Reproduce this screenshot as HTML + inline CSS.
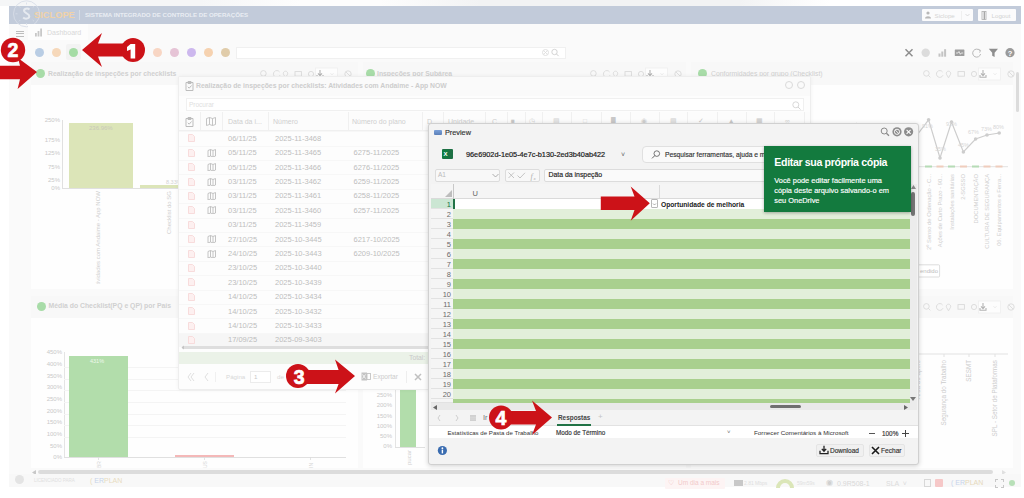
<!DOCTYPE html>
<html><head><meta charset="utf-8">
<style>
*{margin:0;padding:0;box-sizing:border-box}
html,body{width:1024px;height:498px;overflow:hidden;background:#fff;font-family:"Liberation Sans",sans-serif}
.a{position:absolute}
.t{position:absolute;white-space:nowrap;line-height:1}
.dot{position:absolute;width:9px;height:9px;border-radius:50%;background-image:radial-gradient(circle at 50% 30%,rgba(255,255,255,0.45),rgba(255,255,255,0) 60%)}
.ph{position:absolute;background:#f8f8f8}
.pb{position:absolute;background:#fefefe}
.ptitle{position:absolute;white-space:nowrap;line-height:1;font-size:6.84px;font-weight:bold;color:#d0d0d0}
.lbl{position:absolute;white-space:nowrap;line-height:1;font-size:6px;color:#c9c9c9;text-align:right}
.tr{position:absolute;left:0;width:633px;height:14.5px;border-top:1px solid #f6f6f6}
.tc{position:absolute;white-space:nowrap;line-height:1;font-size:7.5px;color:#bdbdbd}
.xr{position:absolute;left:0;width:457px;height:10px}
.rn{position:absolute;left:0;width:22px;height:10px;text-align:right;padding-right:2px;font-size:7px;line-height:10px;color:#6a6a6a;border-bottom:1px solid #e4e4e4}
</style></head><body>
<!-- ============ DASHBOARD (washed) ============ -->
<div class="a" style="left:9px;top:24px;width:1012px;height:463px;background:#fafafa"></div>
<div class="a" style="left:0;top:0;width:1024px;height:6px;background:linear-gradient(90deg,#f5f6f7 0px,#f5f6f7 200px,#fdfdfd 300px,#fdfdfd 380px,#f2f3f4 480px,#f2f3f4 740px,#ffffff 830px)"></div>
<!-- header -->
<div class="a" style="left:9px;top:6px;width:1012px;height:18px;background:#c2cbda"></div>
<svg class="a" style="left:10px;top:0px" width="34" height="30" viewBox="10 0 34 30">
<circle cx="26.5" cy="13.8" r="13" fill="none" stroke="#d8dee8" stroke-width="0.9"/>
<g stroke="#d8dee8" stroke-width="0.8"><path d="M26.5,2.5 V4.5 M26.5,23 V25 M15.5,13.8 H17.5 M35.5,13.8 H37.5 M19,6.3 L20.3,7.6 M32.7,20 L34,21.3 M34,6.3 L32.7,7.6 M20.3,20 L19,21.3"/></g>
<path d="M29.5,9.5 C27.5,7.8 23.5,8.6 24.2,11.3 C24.8,13.4 29.4,13.5 29.3,16.3 C29.2,19 25,19.3 23.2,17.5" fill="none" stroke="#e6eaf0" stroke-width="2"/>
</svg>
<div class="t" style="left:34px;top:10.5px;font-size:9.3px;font-weight:bold;color:#f0d2a8">SICLOPE</div>
<div class="a" style="left:79px;top:10px;width:1px;height:10px;background:#d6dce6"></div>
<div class="t" style="left:85px;top:12px;font-size:6.15px;font-weight:bold;color:#e9edf3">SISTEMA INTEGRADO DE CONTROLE DE OPERAÇÕES</div>
<div class="a" style="left:922px;top:9px;width:51px;height:12px;background:#fbfbfc;border-radius:1px"></div>
<svg class="a" style="left:924px;top:10px" width="8" height="10"><circle cx="4" cy="3" r="1.6" fill="#b8b8b8"/><path d="M1,8.5 C1,5.5 7,5.5 7,8.5 Z" fill="#b8b8b8"/></svg>
<div class="t" style="left:934.5px;top:12.5px;font-size:6.2px;color:#d4d4d4">Siclope</div>
<div class="a" style="left:961px;top:10.5px;width:1px;height:9px;background:#f0f0f0"></div>
<svg class="a" style="left:965px;top:13px" width="5" height="4"><path d="M0.5,1 L2.5,3 L4.5,1" fill="none" stroke="#d0d0d0" stroke-width="0.7"/></svg>
<div class="a" style="left:978px;top:9px;width:38px;height:12px;background:#fbfbfc;border-radius:1px"></div>
<svg class="a" style="left:981px;top:10.5px" width="7" height="9"><rect x="1" y="0.5" width="4" height="8" fill="none" stroke="#b0b0b0" stroke-width="0.8"/><rect x="2.6" y="0.5" width="1.4" height="8" fill="#a8a8a8"/></svg>
<div class="t" style="left:991.5px;top:12.5px;font-size:6.2px;color:#d2d2d2">Logout</div>
<!-- tab bar -->
<div class="a" style="left:28px;top:24px;width:60px;height:16px;background:#fdfdfd"></div>
<div class="a" style="left:16px;top:30.5px;width:7.5px;height:6.5px;border-top:1.2px solid #bdbdbd;border-bottom:1.2px solid #bdbdbd"></div>
<div class="a" style="left:16px;top:33.2px;width:7.5px;height:1.2px;background:#bdbdbd"></div>
<svg class="a" style="left:34px;top:28px" width="10" height="9"><g fill="#c8c8c8"><rect x="1" y="5" width="1.8" height="3.5"/><rect x="3.6" y="3" width="1.8" height="5.5"/><rect x="6.2" y="0.5" width="1.8" height="8"/></g></svg>
<div class="t" style="left:47px;top:29px;font-size:7px;color:#d8d8d8">Dashboard</div>
<!-- toolbar row -->
<div class="dot" style="left:34.5px;top:48px;background:#b9cde4"></div>
<div class="dot" style="left:51.5px;top:48px;background:#f6d8ba"></div>
<div class="a" style="left:66px;top:44px;width:15px;height:16px;background:#f3f3f3;border-radius:2px"></div>
<div class="dot" style="left:68.5px;top:48px;background:#a5dca5"></div>
<div class="dot" style="left:152.7px;top:48px;background:#f8d6c4"></div>
<div class="dot" style="left:169.7px;top:48px;background:#e6c4d6"></div>
<div class="dot" style="left:186.7px;top:48px;background:#cdb8ee"></div>
<div class="dot" style="left:203.5px;top:48px;background:#f6d2b0"></div>
<div class="dot" style="left:220.5px;top:48px;background:#e0ccaa"></div>
<div class="a" style="left:236px;top:46.5px;width:330px;height:12px;background:#fff;border:1px solid #f0f0f0"></div>
<svg class="a" style="left:540px;top:47px" width="22" height="11"><circle cx="5.5" cy="5.5" r="3" fill="none" stroke="#dcdcdc" stroke-width="0.9"/><path d="M3.6,3.6 L7.4,7.4 M7.4,3.6 L3.6,7.4" stroke="#dcdcdc" stroke-width="0.8"/><circle cx="14.5" cy="5" r="2.7" fill="none" stroke="#d0d0d0" stroke-width="0.9"/><path d="M16.4,6.9 L18.6,9.1" stroke="#d0d0d0" stroke-width="1"/></svg>
<svg class="a" style="left:900px;top:44px" width="120" height="18" viewBox="900 44 120 18">
<path d="M905.5,49.2 L912.5,56.2 M912.5,49.2 L905.5,56.2" stroke="#8e8e8e" stroke-width="1.5"/>
<circle cx="925.7" cy="52.7" r="4.2" fill="#dcdcdc"/>
<g fill="#c4c4c4"><rect x="938.5" y="53.5" width="2" height="3.2"/><rect x="941.3" y="51.5" width="2" height="5.2"/><rect x="944.1" y="49.2" width="2" height="7.5"/></g>
<rect x="954.8" y="49.5" width="9.6" height="6.6" fill="#9e9e9e" rx="0.5"/>
<path d="M956,53 H958 L959,51.5 L960.3,54.3 L961.2,53 H963.2" fill="none" stroke="#fff" stroke-width="0.7"/>
<path d="M979.8,50.6 A4,4 0 1 0 980.6,54" fill="none" stroke="#b8b8b8" stroke-width="1"/>
<path d="M978.2,49.2 L980.6,50.4 L979.6,52.6" fill="none" stroke="#b8b8b8" stroke-width="0.9"/>
<path d="M988.8,48.8 H998 L994.6,52.8 V57 L992.2,55.8 V52.8 Z" fill="#8e8e8e"/>
<circle cx="1010" cy="52.7" r="4.6" fill="#9a9a9a"/>
<text x="1010" y="55.6" text-anchor="middle" style="font-family:'Liberation Sans';font-weight:bold;font-size:7.5px" fill="#fff">?</text>
</svg>

<!-- ROW 1 panels -->
<div class="ph" style="left:31px;top:62px;width:327px;height:23px"></div>
<div class="pb" style="left:31px;top:85px;width:327px;height:204px"></div>
<div class="dot" style="left:35.5px;top:69px;background:#a8dca8"></div>
<div class="ptitle" style="left:48px;top:71px">Realização de inspeções por checklists</div>
<svg class="a" style="left:258px;top:67px" width="96" height="14" viewBox="258 67 96 14">
<g fill="none" stroke="#dadada" stroke-width="0.9">
<circle cx="263.4" cy="73.4" r="2.8"/><path d="M265.4,75.4 L267.4,77.4"/>
<path d="M279.6,72 A3.4,3.4 0 1 0 280,75.2"/>
<path d="M285.5,77.8 L283.5,74.3 A2.2,2.2 0 1 1 287.5,74.3 Z"/>
<rect x="295" y="71.6" width="6.4" height="4.6"/>
<circle cx="311" cy="74" r="2.6"/>
<rect x="315.5" y="68" width="22" height="12" stroke="#f0f0f0" fill="#fdfdfd"/>
<circle cx="348" cy="74" r="3.2"/><path d="M346,72 L350,76"/>
</g>
<path d="M320,70 V75 M318,73.4 L320,75.6 L322,73.4 M317,75 V77.2 H323 V75" fill="none" stroke="#b4b4b4" stroke-width="1.1"/>
<path d="M330.5,73.2 L332,74.8 L333.5,73.2" fill="none" stroke="#e6e6e6" stroke-width="0.8"/>
</svg>

<div class="ph" style="left:363px;top:62px;width:323px;height:23px"></div>
<div class="pb" style="left:363px;top:85px;width:323px;height:204px"></div>
<div class="dot" style="left:366px;top:69px;background:#a8dca8"></div>
<div class="ptitle" style="left:377px;top:71px">Inspeções por Subárea</div>
<svg class="a" style="left:588px;top:67px" width="96" height="14" viewBox="588 67 96 14">
<g fill="none" stroke="#dadada" stroke-width="0.9">
<circle cx="593.4" cy="73.4" r="2.8"/><path d="M595.4,75.4 L597.4,77.4"/>
<path d="M609.6,72 A3.4,3.4 0 1 0 610,75.2"/>
<path d="M615.5,77.8 L613.5,74.3 A2.2,2.2 0 1 1 617.5,74.3 Z"/>
<rect x="625" y="71.6" width="6.4" height="4.6"/>
<circle cx="641" cy="74" r="2.6"/>
<rect x="645.5" y="68" width="22" height="12" stroke="#f0f0f0" fill="#fdfdfd"/>
<circle cx="678" cy="74" r="3.2"/><path d="M676,72 L680,76"/>
</g>
<path d="M650,70 V75 M648,73.4 L650,75.6 L652,73.4 M647,75 V77.2 H653 V75" fill="none" stroke="#b4b4b4" stroke-width="1.1"/>
<path d="M660.5,73.2 L662,74.8 L663.5,73.2" fill="none" stroke="#e6e6e6" stroke-width="0.8"/>
</svg>

<div class="ph" style="left:691px;top:62px;width:322px;height:23px"></div>
<div class="pb" style="left:691px;top:85px;width:322px;height:204px"></div>
<div class="dot" style="left:698px;top:69px;background:#a8dca8"></div>
<div class="ptitle" style="left:711px;top:71px;font-weight:normal">Conformidades por grupo (Checklist)</div>
<svg class="a" style="left:921px;top:67px" width="96" height="14" viewBox="921 67 96 14">
<g fill="none" stroke="#dadada" stroke-width="0.9">
<circle cx="926.4" cy="73.4" r="2.8"/><path d="M928.4,75.4 L930.4,77.4"/>
<path d="M942.6,72 A3.4,3.4 0 1 0 943,75.2"/>
<path d="M948.5,77.8 L946.5,74.3 A2.2,2.2 0 1 1 950.5,74.3 Z"/>
<rect x="958" y="71.6" width="6.4" height="4.6"/>
<circle cx="974" cy="74" r="2.6"/>
<rect x="978.5" y="68" width="22" height="12" stroke="#f0f0f0" fill="#fdfdfd"/>
<circle cx="1011" cy="74" r="3.2"/><path d="M1009,72 L1013,76"/>
</g>
<path d="M983,70 V75 M981,73.4 L983,75.6 L985,73.4 M980,75 V77.2 H986 V75" fill="none" stroke="#b4b4b4" stroke-width="1.1"/>
<path d="M993.5,73.2 L995,74.8 L996.5,73.2" fill="none" stroke="#e6e6e6" stroke-width="0.8"/>
</svg>

<!-- left chart row1 -->
<div class="a" style="left:62px;top:120px;width:1px;height:68px;background:#e0e0e0"></div>
<div class="a" style="left:62px;top:188px;width:290px;height:1px;background:#e0e0e0"></div>
<div class="a" style="left:69px;top:123px;width:64px;height:65px;background:#dce5b8"></div>
<div class="a" style="left:140px;top:185px;width:38px;height:3px;background:#dce5b8"></div>
<div class="lbl" style="left:40px;top:117px;width:20px">250%</div>
<div class="lbl" style="left:40px;top:137px;width:20px">175%</div>
<div class="lbl" style="left:40px;top:150px;width:20px">125%</div>
<div class="lbl" style="left:40px;top:164px;width:20px">75%</div>
<div class="lbl" style="left:40px;top:177px;width:20px">25%</div>
<div class="lbl" style="left:40px;top:185px;width:20px">0%</div>
<div class="t" style="left:89px;top:124.5px;font-size:6px;color:#c8c8b8">236.96%</div>
<div class="t" style="left:166px;top:180px;font-size:5.5px;color:#d4d4d4">8.33%</div>
<svg class="a" style="left:90px;top:188px" width="14" height="96"><text transform="translate(10,3) rotate(-90)" text-anchor="end" style="font-family:'Liberation Sans';font-size:6px" fill="#cfcfcf">Atividades com Andaime - App NOW</text></svg>
<svg class="a" style="left:161px;top:188px" width="14" height="96"><text transform="translate(10,3) rotate(-90)" text-anchor="end" style="font-family:'Liberation Sans';font-size:6px" fill="#cfcfcf">Checklist do SG</text></svg>

<!-- right line chart row1 -->
<svg class="a" style="left:691px;top:85px" width="322" height="204" viewBox="691 85 322 204">
<line x1="700" y1="166.7" x2="1008" y2="166.7" stroke="#e2e2e2" stroke-width="1"/>
<polyline fill="none" stroke="#cdcdcd" stroke-width="1.2" points="832.5,125.5 856.5,124.5 880,132 905,140 917,135 928.6,119.8 940,158 951.5,122 963.4,152 975.6,139 987,135 999.2,133"/>
<g fill="#cdcdcd"><circle cx="832.5" cy="125.5" r="1.8"/><circle cx="856.5" cy="124.5" r="1.8"/><circle cx="928.6" cy="119.8" r="1.8"/><circle cx="940" cy="158" r="1.8"/><circle cx="951.5" cy="122" r="1.8"/><circle cx="963.4" cy="152" r="1.8"/><circle cx="975.6" cy="139" r="1.8"/><circle cx="987" cy="135" r="1.8"/><circle cx="999.2" cy="133" r="1.8"/></g>
<g fill="#b6dcb6"><rect x="925" y="165.5" width="7" height="2"/><rect x="948" y="165.5" width="7" height="2"/><rect x="972" y="165.5" width="7" height="2"/></g>
<g fill="#f0cdbd"><rect x="936.5" y="165.5" width="7" height="2"/><rect x="960" y="165.5" width="7" height="2"/><rect x="983.5" y="165.5" width="7" height="2"/><rect x="995.5" y="165.5" width="7" height="2"/></g>
<g style="font-family:'Liberation Sans';font-size:5.5px" fill="#d6d6d6">
<text x="922" y="128">91%</text><text x="935" y="151">35%</text><text x="946" y="126">91%</text><text x="958" y="147">45%</text><text x="968" y="134">67%</text><text x="981" y="131">73%</text><text x="993" y="129">80%</text>
</g>
<g style="font-family:'Liberation Sans';font-size:5.8px" fill="#cfcfcf" text-anchor="end">
<text transform="translate(930.6,174) rotate(-90)">2º Senso de Ordenação - C...</text>
<text transform="translate(942,174) rotate(-90)">Ações de Curto Prazo - 90...</text>
<text transform="translate(953.5,174) rotate(-90)">Instalações sanitárias</text>
<text transform="translate(965.4,174) rotate(-90)">2-SGSSO</text>
<text transform="translate(977.6,174) rotate(-90)">DOCUMENTAÇÃO</text>
<text transform="translate(989,174) rotate(-90)">CULTURA DE SEGURANÇA</text>
<text transform="translate(1001.2,174) rotate(-90)">06. Equipamentos e Ferra...</text>
</g>
<rect x="918" y="264.8" width="21.6" height="12.2" fill="#fff" stroke="#d4d4d4" stroke-width="0.8" rx="1"/>
<text x="920" y="273" style="font-family:'Liberation Sans';font-size:6px" fill="#bdbdbd">endido</text>
</svg>
<!-- ROW 2 panels -->
<div class="ph" style="left:31px;top:296px;width:327px;height:22px"></div>
<div class="pb" style="left:31px;top:318px;width:327px;height:150px"></div>
<div class="dot" style="left:36.5px;top:302px;background:#a8dca8"></div>
<div class="ptitle" style="left:48.5px;top:303px">Média do Checklist(PQ e QP) por País</div>
<div class="ph" style="left:363px;top:296px;width:323px;height:22px"></div>
<div class="pb" style="left:363px;top:318px;width:323px;height:150px"></div>
<div class="ph" style="left:691px;top:296px;width:322px;height:22px"></div>
<div class="pb" style="left:691px;top:318px;width:322px;height:150px"></div>
<svg class="a" style="left:921px;top:299.5px" width="96" height="14" viewBox="921 299.5 96 14">
<g fill="none" stroke="#dadada" stroke-width="0.9">
<circle cx="926.4" cy="305.9" r="2.8"/><path d="M928.4,307.9 L930.4,309.9"/>
<path d="M942.6,304.5 A3.4,3.4 0 1 0 943,307.7"/>
<path d="M948.5,310.3 L946.5,306.8 A2.2,2.2 0 1 1 950.5,306.8 Z"/>
<rect x="958" y="304.1" width="6.4" height="4.6"/>
<circle cx="974" cy="306.5" r="2.6"/>
<rect x="978.5" y="300.5" width="22" height="12" stroke="#f0f0f0" fill="#fdfdfd"/>
<circle cx="1011" cy="306.5" r="3.2"/><path d="M1009,304.5 L1013,308.5"/>
</g>
<path d="M983,302.5 V307.5 M981,305.9 L983,308.1 L985,305.9 M980,307.5 V309.7 H986 V307.5" fill="none" stroke="#b4b4b4" stroke-width="1.1"/>
<path d="M993.5,305.7 L995,307.3 L996.5,305.7" fill="none" stroke="#e6e6e6" stroke-width="0.8"/>
</svg>

<!-- left chart row2 -->
<div class="a" style="left:64px;top:352px;width:1px;height:105px;background:#e4e4e4"></div>
<div class="a" style="left:64px;top:457px;width:282px;height:1px;background:#e0e0e0"></div>
<div class="a" style="left:64px;top:367px;width:282px;height:1px;background:#f4f4f4"></div>
<div class="a" style="left:64px;top:379px;width:282px;height:1px;background:#f4f4f4"></div>
<div class="a" style="left:64px;top:390px;width:282px;height:1px;background:#f4f4f4"></div>
<div class="a" style="left:64px;top:402px;width:282px;height:1px;background:#f4f4f4"></div>
<div class="a" style="left:64px;top:414px;width:282px;height:1px;background:#f4f4f4"></div>
<div class="a" style="left:64px;top:425px;width:282px;height:1px;background:#f4f4f4"></div>
<div class="a" style="left:64px;top:437px;width:282px;height:1px;background:#f4f4f4"></div>
<div class="a" style="left:69px;top:356px;width:59px;height:101px;background:#b2ddab"></div>
<div class="t" style="left:90px;top:359px;font-size:5.5px;color:#eef8ec">431%</div>
<div class="a" style="left:175px;top:455px;width:59px;height:2px;background:#f4b8b8"></div>
<div class="lbl" style="left:38px;top:349px;width:24px">450%</div>
<div class="lbl" style="left:38px;top:361px;width:24px">400%</div>
<div class="lbl" style="left:38px;top:373px;width:24px">350%</div>
<div class="lbl" style="left:38px;top:384px;width:24px">300%</div>
<div class="lbl" style="left:38px;top:396px;width:24px">250%</div>
<div class="lbl" style="left:38px;top:408px;width:24px">200%</div>
<div class="lbl" style="left:38px;top:419px;width:24px">150%</div>
<div class="lbl" style="left:38px;top:431px;width:24px">100%</div>
<div class="lbl" style="left:38px;top:443px;width:24px">50%</div>
<div class="lbl" style="left:38px;top:454px;width:24px">0%</div>

<svg class="a" style="left:60px;top:456px" width="300" height="14" viewBox="60 456 300 14">
<g stroke="#dcdcdc" stroke-width="0.8"><path d="M98.5,457 V460 M204.5,457 V460 M310.5,457 V460"/></g>
<g style="font-family:'Liberation Sans';font-size:5px" fill="#d4d4d4"><text transform="translate(100.5,468) rotate(-90)">BR</text><text transform="translate(206.5,468) rotate(-90)">US</text><text transform="translate(312.5,468) rotate(-90)">IN</text></g>
</svg>
<!-- middle chart row2 -->
<div class="a" style="left:395px;top:380px;width:1px;height:68px;background:#e4e4e4"></div>
<div class="a" style="left:395px;top:447px;width:30px;height:1px;background:#e0e0e0"></div>
<div class="a" style="left:400px;top:380px;width:16px;height:67px;background:#b2ddab"></div>
<div class="lbl" style="left:368px;top:391.7px;width:24px">250%</div>
<div class="lbl" style="left:368px;top:401.7px;width:24px">200%</div>
<div class="lbl" style="left:368px;top:412.7px;width:24px">150%</div>
<div class="lbl" style="left:368px;top:422.7px;width:24px">100%</div>
<div class="lbl" style="left:368px;top:432.7px;width:24px">50%</div>
<div class="lbl" style="left:368px;top:442.7px;width:24px">0%</div>

<svg class="a" style="left:403px;top:449px" width="10" height="22"><text transform="translate(7.5,1) rotate(-90)" text-anchor="end" style="font-family:'Liberation Sans';font-size:6px" fill="#d0d0d0">pucar</text></svg>
<!-- right chart row2 -->
<svg class="a" style="left:691px;top:318px" width="322" height="150" viewBox="691 318 322 150">
<line x1="700" y1="354" x2="1008" y2="354" stroke="#e2e2e2" stroke-width="1"/>
<g stroke="#e2e2e2"><line x1="944" y1="354" x2="944" y2="357"/><line x1="969" y1="354" x2="969" y2="357"/><line x1="995" y1="354" x2="995" y2="357"/></g>
<g style="font-family:'Liberation Sans';font-size:6.3px" fill="#cdcdcd" text-anchor="end">
<text transform="translate(946,360) rotate(-90)">Segurança do Trabalho</text>
<text transform="translate(971,360) rotate(-90)">SESMT</text>
<text transform="translate(997,360) rotate(-90)">SPL - Setor de Plataformas</text>
<text transform="translate(920,360) rotate(-90)">Área de apoio</text>
</g>
</svg>
<!-- page scrollbars/footer -->
<div class="a" style="left:38px;top:469.5px;width:955px;height:4.5px;background:#dcdcdc;border-radius:3px"></div>
<svg class="a" style="left:32px;top:469.5px" width="4" height="5"><polygon points="4,0 4,5 0,2.5" fill="#c8c8c8"/></svg>
<svg class="a" style="left:1002px;top:469.5px" width="4" height="5"><polygon points="0,0 0,5 4,2.5" fill="#e0e0e0"/></svg>
<div class="a" style="left:9px;top:474px;width:1012px;height:13px;background:#f8f8f8"></div>
<div class="dot" style="left:15px;top:475px;background:#e4e4e4"></div>
<div class="t" style="left:34px;top:479px;font-size:4.5px;color:#e0e0e0">LICENCIADO PARA</div>
<div class="t" style="left:90px;top:477px;font-size:7px;color:#e8dcc0">( <span style="color:#c8d4e8">ER</span>PLAN</div>
<div class="a" style="left:1015.5px;top:72px;width:3.5px;height:40px;background:#dcdcdc;border-radius:2px"></div>

<!-- status items -->
<div class="a" style="left:665px;top:477.5px;width:60px;height:11px;background:#fdf4f4;border-radius:1px"></div>
<div class="t" style="left:668px;top:479.0px;font-size:7px;color:#f0b8b8">&#9825;</div>
<div class="t" style="left:678px;top:480.0px;font-size:6.5px;color:#f2caca">Um dia a mais</div>
<div class="a" style="left:734px;top:480.0px;width:9px;height:6px;background:#c8c8c8"></div>
<div class="t" style="left:744px;top:480.5px;font-size:5px;color:#dedede">2.81 Mbps</div>
<svg class="a" style="left:776px;top:475.5px" width="18" height="12"><path d="M2,12 A7,7 0 0 1 16,12" fill="none" stroke="#dbe6b8" stroke-width="4"/></svg>
<div class="t" style="left:797px;top:480.5px;font-size:5px;color:#e0e0e0">59m59s</div>
<div class="t" style="left:826px;top:478.5px;font-size:8px;color:#d0d0d0">&#9673;</div>
<div class="t" style="left:837px;top:479.5px;font-size:7px;color:#d8d8d8">0.9R508-1</div>
<div class="t" style="left:886px;top:479.5px;font-size:7px;color:#dcdcdc">SLA &nbsp;&#709;</div>
<div class="a" style="left:924px;top:479.0px;width:7px;height:8px;border:1px solid #d8d8d8"></div>
<div class="a" style="left:935px;top:479.0px;width:8px;height:8px;background:#f6c8c8;border-radius:1px"></div>
<div class="t" style="left:951px;top:478.5px;font-size:7px;color:#e6d8bc"><span style="color:#c8d4ec">( ER</span>PLAN</div>
<div class="a" style="left:995px;top:478.5px;width:9px;height:9px;border:1px dashed #c8c8c8"></div>
<div class="dot" style="left:1009px;top:480.0px;width:6px;height:6px;background:#b8e0b8"></div>
<!-- ============ TABLE MODAL (washed) ============ -->
<div class="a" style="left:178px;top:76px;width:633px;height:314px;background:#fdfdfd;border:1px solid #eeeeee;border-radius:2px;box-shadow:0 0 4px rgba(0,0,0,0.05)"></div>
<div class="a" style="left:179px;top:77px;width:631px;height:19px;background:#fafafa"></div>
<svg class="a" style="left:184.5px;top:81px" width="9" height="10"><path d="M1,1.5 H8 V9.5 H1 Z M3,0.5 H6 V2.5 H3 Z M2.8,5.8 L4.2,7.2 L6.5,4.5" fill="none" stroke="#bdbdbd" stroke-width="1"/></svg>
<div class="t" style="left:196px;top:82.5px;font-size:6.84px;font-weight:bold;color:#cdcdcd">Realização de inspeções por checklists: Atividades com Andaime - App NOW</div>
<div class="a" style="left:785px;top:81px;width:8px;height:8px;border-radius:50%;border:1.2px solid #dadada"></div>
<div class="a" style="left:797px;top:81px;width:8px;height:8px;border-radius:50%;border:1.2px solid #dadada"></div>
<div class="a" style="left:185.5px;top:98px;width:618.5px;height:12.5px;background:#fff;border:1px solid #f0f0f0"></div>
<div class="t" style="left:189px;top:101.5px;font-size:6.5px;color:#e0e0e0">Procurar</div>
<svg class="a" style="left:791px;top:99.5px" width="11" height="11"><circle cx="4.8" cy="4.8" r="3" fill="none" stroke="#d4d4d4" stroke-width="0.9"/><path d="M7,7 L9.5,9.5" stroke="#d4d4d4" stroke-width="1"/></svg>
<div class="a" style="left:179px;top:112px;width:631px;height:19px;background:#fcfcfc;border-bottom:1px solid #f0f0f0"></div>
<div class="a" style="left:200px;top:112px;width:1px;height:19px;background:#f0f0f0"></div>
<div class="a" style="left:222px;top:112px;width:1px;height:19px;background:#f0f0f0"></div>
<div class="a" style="left:268px;top:112px;width:1px;height:19px;background:#f0f0f0"></div>
<div class="a" style="left:348px;top:112px;width:1px;height:19px;background:#f0f0f0"></div>
<div class="a" style="left:422px;top:112px;width:1px;height:19px;background:#f0f0f0"></div>
<div class="a" style="left:443.4px;top:112px;width:1px;height:19px;background:#f0f0f0"></div>
<div class="a" style="left:485.4px;top:112px;width:1px;height:19px;background:#f0f0f0"></div>
<div class="a" style="left:507px;top:112px;width:1px;height:19px;background:#f0f0f0"></div>
<div class="a" style="left:524.5px;top:112px;width:1px;height:19px;background:#f0f0f0"></div>
<div class="a" style="left:542px;top:112px;width:1px;height:19px;background:#f0f0f0"></div>
<div class="a" style="left:571.4px;top:112px;width:1px;height:19px;background:#f0f0f0"></div>
<div class="a" style="left:600.7px;top:112px;width:1px;height:19px;background:#f0f0f0"></div>
<div class="a" style="left:629.8px;top:112px;width:1px;height:19px;background:#f0f0f0"></div>
<div class="a" style="left:659px;top:112px;width:1px;height:19px;background:#f0f0f0"></div>
<div class="a" style="left:687.4px;top:112px;width:1px;height:19px;background:#f0f0f0"></div>
<div class="a" style="left:716.7px;top:112px;width:1px;height:19px;background:#f0f0f0"></div>
<div class="a" style="left:746px;top:112px;width:1px;height:19px;background:#f0f0f0"></div>
<div class="a" style="left:774.3px;top:112px;width:1px;height:19px;background:#f0f0f0"></div>
<div class="a" style="left:803.6px;top:112px;width:1px;height:19px;background:#f0f0f0"></div>
<svg class="a" style="left:185px;top:116.5px" width="9" height="10"><path d="M1,1.5 H8 V9.5 H1 Z M3,0.5 H6 V2.5 H3 Z M2.8,5.8 L4.2,7.2 L6.5,4.5" fill="none" stroke="#bdbdbd" stroke-width="1"/></svg>
<svg class="a" style="left:206px;top:117px" width="10" height="9"><path d="M0.5,1.5 L3.5,0.5 L6.5,1.5 L9.5,0.5 L9.5,7.5 L6.5,8.5 L3.5,7.5 L0.5,8.5 Z M3.5,0.5 L3.5,7.5 M6.5,1.5 L6.5,8.5" fill="none" stroke="#bdbdbd" stroke-width="0.9"/></svg>
<div class="t" style="left:228px;top:117.5px;font-size:7px;color:#cfcfcf">Data da i...</div>
<div class="t" style="left:273px;top:117.5px;font-size:7px;color:#cfcfcf">Número</div>
<div class="t" style="left:352px;top:117.5px;font-size:7px;color:#cfcfcf">Número do plano</div>
<div class="t" style="left:427px;top:117.5px;font-size:7px;color:#cfcfcf">D</div>
<div class="t" style="left:448px;top:117.5px;font-size:7px;color:#cfcfcf">Unidade</div>
<div class="t" style="left:492px;top:117.5px;font-size:7px;color:#cfcfcf">C</div>
<div class="t" style="left:511px;top:117.5px;font-size:6.5px;color:#c8c8c8">&#9632;</div>
<div class="t" style="left:529px;top:117.5px;font-size:6.5px;color:#d4d4d4">&#9719;</div>
<div class="t" style="left:553px;top:117.5px;font-size:6.5px;color:#d4d4d4">&#9636;</div>
<div class="t" style="left:583px;top:117.5px;font-size:6.5px;color:#d4d4d4">&#9633;</div>
<div class="t" style="left:611px;top:117.5px;font-size:6.5px;color:#c8c8c8">&#9608;</div>
<div class="t" style="left:641px;top:117.5px;font-size:6.5px;color:#d0d0d0">&#9673;</div>
<div class="t" style="left:670px;top:117.5px;font-size:6.5px;color:#d0d0d0">&#9636;</div>
<div class="t" style="left:698px;top:117.5px;font-size:6.5px;color:#c8c8c8">&#10003;</div>
<div class="t" style="left:728px;top:117.5px;font-size:6.5px;color:#c8c8c8">&#9650;</div>
<div class="t" style="left:756px;top:117.5px;font-size:6.5px;color:#c8c8c8">&#9638;</div>
<div class="t" style="left:785px;top:117.5px;font-size:6.5px;color:#d4d4d4">&#8734;</div>
<div class="a" style="left:179px;top:131.20000000000002px;width:631px;height:14.4px;background:#fdfdfd;border-top:1px solid #f7f7f7"></div>
<svg class="a" style="left:188px;top:134.40px" width="7" height="8"><path d="M0.5,0.5 L4.5,0.5 L6.5,2.5 L6.5,7.5 L0.5,7.5 Z" fill="#fdf0f0" stroke="#f6d6d6" stroke-width="0.8"/></svg>
<div class="tc" style="left:228px;top:134.80px">06/11/25</div>
<div class="tc" style="left:275px;top:134.80px">2025-11-3468</div>
<div class="a" style="left:179px;top:145.60000000000002px;width:631px;height:14.4px;background:#fdfdfd;border-top:1px solid #f7f7f7"></div>
<svg class="a" style="left:188px;top:148.80px" width="7" height="8"><path d="M0.5,0.5 L4.5,0.5 L6.5,2.5 L6.5,7.5 L0.5,7.5 Z" fill="#fdf0f0" stroke="#f6d6d6" stroke-width="0.8"/></svg>
<svg class="a" style="left:207px;top:148.80px" width="10" height="8"><path d="M1,1.5 L3.5,0.5 L6,1.5 L8.5,0.5 L8.5,7 L6,8 L3.5,7 L1,8 Z M3.5,0.5 L3.5,7 M6,1.5 L6,8" fill="none" stroke="#bdbdbd" stroke-width="0.9"/></svg>
<div class="tc" style="left:228px;top:149.20px">05/11/25</div>
<div class="tc" style="left:275px;top:149.20px">2025-11-3465</div>
<div class="tc" style="left:353.5px;top:149.20px">6275-11/2025</div>
<div class="a" style="left:179px;top:160.00000000000003px;width:631px;height:14.4px;background:#fdfdfd;border-top:1px solid #f7f7f7"></div>
<svg class="a" style="left:188px;top:163.20px" width="7" height="8"><path d="M0.5,0.5 L4.5,0.5 L6.5,2.5 L6.5,7.5 L0.5,7.5 Z" fill="#fdf0f0" stroke="#f6d6d6" stroke-width="0.8"/></svg>
<svg class="a" style="left:207px;top:163.20px" width="10" height="8"><path d="M1,1.5 L3.5,0.5 L6,1.5 L8.5,0.5 L8.5,7 L6,8 L3.5,7 L1,8 Z M3.5,0.5 L3.5,7 M6,1.5 L6,8" fill="none" stroke="#bdbdbd" stroke-width="0.9"/></svg>
<div class="tc" style="left:228px;top:163.60px">05/11/25</div>
<div class="tc" style="left:275px;top:163.60px">2025-11-3466</div>
<div class="tc" style="left:353.5px;top:163.60px">6276-11/2025</div>
<div class="a" style="left:179px;top:174.40000000000003px;width:631px;height:14.4px;background:#fdfdfd;border-top:1px solid #f7f7f7"></div>
<svg class="a" style="left:188px;top:177.60px" width="7" height="8"><path d="M0.5,0.5 L4.5,0.5 L6.5,2.5 L6.5,7.5 L0.5,7.5 Z" fill="#fdf0f0" stroke="#f6d6d6" stroke-width="0.8"/></svg>
<svg class="a" style="left:207px;top:177.60px" width="10" height="8"><path d="M1,1.5 L3.5,0.5 L6,1.5 L8.5,0.5 L8.5,7 L6,8 L3.5,7 L1,8 Z M3.5,0.5 L3.5,7 M6,1.5 L6,8" fill="none" stroke="#bdbdbd" stroke-width="0.9"/></svg>
<div class="tc" style="left:228px;top:178.00px">03/11/25</div>
<div class="tc" style="left:275px;top:178.00px">2025-11-3462</div>
<div class="tc" style="left:353.5px;top:178.00px">6259-11/2025</div>
<div class="a" style="left:179px;top:188.8px;width:631px;height:14.4px;background:#fdfdfd;border-top:1px solid #f7f7f7"></div>
<svg class="a" style="left:188px;top:192.00px" width="7" height="8"><path d="M0.5,0.5 L4.5,0.5 L6.5,2.5 L6.5,7.5 L0.5,7.5 Z" fill="#fdf0f0" stroke="#f6d6d6" stroke-width="0.8"/></svg>
<svg class="a" style="left:207px;top:192.00px" width="10" height="8"><path d="M1,1.5 L3.5,0.5 L6,1.5 L8.5,0.5 L8.5,7 L6,8 L3.5,7 L1,8 Z M3.5,0.5 L3.5,7 M6,1.5 L6,8" fill="none" stroke="#bdbdbd" stroke-width="0.9"/></svg>
<div class="tc" style="left:228px;top:192.40px">03/11/25</div>
<div class="tc" style="left:275px;top:192.40px">2025-11-3461</div>
<div class="tc" style="left:353.5px;top:192.40px">6258-11/2025</div>
<div class="a" style="left:179px;top:203.20000000000002px;width:631px;height:14.4px;background:#fdfdfd;border-top:1px solid #f7f7f7"></div>
<svg class="a" style="left:188px;top:206.40px" width="7" height="8"><path d="M0.5,0.5 L4.5,0.5 L6.5,2.5 L6.5,7.5 L0.5,7.5 Z" fill="#fdf0f0" stroke="#f6d6d6" stroke-width="0.8"/></svg>
<svg class="a" style="left:207px;top:206.40px" width="10" height="8"><path d="M1,1.5 L3.5,0.5 L6,1.5 L8.5,0.5 L8.5,7 L6,8 L3.5,7 L1,8 Z M3.5,0.5 L3.5,7 M6,1.5 L6,8" fill="none" stroke="#bdbdbd" stroke-width="0.9"/></svg>
<div class="tc" style="left:228px;top:206.80px">03/11/25</div>
<div class="tc" style="left:275px;top:206.80px">2025-11-3460</div>
<div class="tc" style="left:353.5px;top:206.80px">6257-11/2025</div>
<div class="a" style="left:179px;top:217.60000000000002px;width:631px;height:14.4px;background:#fdfdfd;border-top:1px solid #f7f7f7"></div>
<svg class="a" style="left:188px;top:220.80px" width="7" height="8"><path d="M0.5,0.5 L4.5,0.5 L6.5,2.5 L6.5,7.5 L0.5,7.5 Z" fill="#fdf0f0" stroke="#f6d6d6" stroke-width="0.8"/></svg>
<div class="tc" style="left:228px;top:221.20px">03/11/25</div>
<div class="tc" style="left:275px;top:221.20px">2025-11-3459</div>
<div class="a" style="left:179px;top:232.0px;width:631px;height:14.4px;background:#fdfdfd;border-top:1px solid #f7f7f7"></div>
<svg class="a" style="left:188px;top:235.20px" width="7" height="8"><path d="M0.5,0.5 L4.5,0.5 L6.5,2.5 L6.5,7.5 L0.5,7.5 Z" fill="#fdf0f0" stroke="#f6d6d6" stroke-width="0.8"/></svg>
<svg class="a" style="left:207px;top:235.20px" width="10" height="8"><path d="M1,1.5 L3.5,0.5 L6,1.5 L8.5,0.5 L8.5,7 L6,8 L3.5,7 L1,8 Z M3.5,0.5 L3.5,7 M6,1.5 L6,8" fill="none" stroke="#bdbdbd" stroke-width="0.9"/></svg>
<div class="tc" style="left:228px;top:235.60px">27/10/25</div>
<div class="tc" style="left:275px;top:235.60px">2025-10-3445</div>
<div class="tc" style="left:353.5px;top:235.60px">6217-10/2025</div>
<div class="a" style="left:179px;top:246.40000000000003px;width:631px;height:14.4px;background:#fdfdfd;border-top:1px solid #f7f7f7"></div>
<svg class="a" style="left:188px;top:249.60px" width="7" height="8"><path d="M0.5,0.5 L4.5,0.5 L6.5,2.5 L6.5,7.5 L0.5,7.5 Z" fill="#fdf0f0" stroke="#f6d6d6" stroke-width="0.8"/></svg>
<svg class="a" style="left:207px;top:249.60px" width="10" height="8"><path d="M1,1.5 L3.5,0.5 L6,1.5 L8.5,0.5 L8.5,7 L6,8 L3.5,7 L1,8 Z M3.5,0.5 L3.5,7 M6,1.5 L6,8" fill="none" stroke="#bdbdbd" stroke-width="0.9"/></svg>
<div class="tc" style="left:228px;top:250.00px">24/10/25</div>
<div class="tc" style="left:275px;top:250.00px">2025-10-3443</div>
<div class="tc" style="left:353.5px;top:250.00px">6209-10/2025</div>
<div class="a" style="left:179px;top:260.8px;width:631px;height:14.4px;background:#fdfdfd;border-top:1px solid #f7f7f7"></div>
<svg class="a" style="left:188px;top:264.00px" width="7" height="8"><path d="M0.5,0.5 L4.5,0.5 L6.5,2.5 L6.5,7.5 L0.5,7.5 Z" fill="#fdf0f0" stroke="#f6d6d6" stroke-width="0.8"/></svg>
<div class="tc" style="left:228px;top:264.40px">23/10/25</div>
<div class="tc" style="left:275px;top:264.40px">2025-10-3440</div>
<div class="a" style="left:179px;top:275.2px;width:631px;height:14.4px;background:#fdfdfd;border-top:1px solid #f7f7f7"></div>
<svg class="a" style="left:188px;top:278.40px" width="7" height="8"><path d="M0.5,0.5 L4.5,0.5 L6.5,2.5 L6.5,7.5 L0.5,7.5 Z" fill="#fdf0f0" stroke="#f6d6d6" stroke-width="0.8"/></svg>
<div class="tc" style="left:228px;top:278.80px">23/10/25</div>
<div class="tc" style="left:275px;top:278.80px">2025-10-3439</div>
<div class="a" style="left:179px;top:289.6px;width:631px;height:14.4px;background:#fdfdfd;border-top:1px solid #f7f7f7"></div>
<svg class="a" style="left:188px;top:292.80px" width="7" height="8"><path d="M0.5,0.5 L4.5,0.5 L6.5,2.5 L6.5,7.5 L0.5,7.5 Z" fill="#fdf0f0" stroke="#f6d6d6" stroke-width="0.8"/></svg>
<div class="tc" style="left:228px;top:293.20px">14/10/25</div>
<div class="tc" style="left:275px;top:293.20px">2025-10-3434</div>
<div class="a" style="left:179px;top:304.00000000000006px;width:631px;height:14.4px;background:#fdfdfd;border-top:1px solid #f7f7f7"></div>
<svg class="a" style="left:188px;top:307.20px" width="7" height="8"><path d="M0.5,0.5 L4.5,0.5 L6.5,2.5 L6.5,7.5 L0.5,7.5 Z" fill="#fdf0f0" stroke="#f6d6d6" stroke-width="0.8"/></svg>
<div class="tc" style="left:228px;top:307.60px">14/10/25</div>
<div class="tc" style="left:275px;top:307.60px">2025-10-3432</div>
<div class="a" style="left:179px;top:318.40000000000003px;width:631px;height:14.4px;background:#fdfdfd;border-top:1px solid #f7f7f7"></div>
<svg class="a" style="left:188px;top:321.60px" width="7" height="8"><path d="M0.5,0.5 L4.5,0.5 L6.5,2.5 L6.5,7.5 L0.5,7.5 Z" fill="#fdf0f0" stroke="#f6d6d6" stroke-width="0.8"/></svg>
<div class="tc" style="left:228px;top:322.00px">14/10/25</div>
<div class="tc" style="left:275px;top:322.00px">2025-10-3433</div>
<div class="a" style="left:179px;top:332.8px;width:631px;height:14.4px;background:#f6f6f6;border-top:1px solid #f7f7f7"></div>
<svg class="a" style="left:188px;top:336.00px" width="7" height="8"><path d="M0.5,0.5 L4.5,0.5 L6.5,2.5 L6.5,7.5 L0.5,7.5 Z" fill="#fdf0f0" stroke="#f6d6d6" stroke-width="0.8"/></svg>
<div class="tc" style="left:228px;top:336.40px">17/09/25</div>
<div class="tc" style="left:275px;top:336.40px">2025-09-3403</div>
<div class="a" style="left:182px;top:345.5px;width:250px;height:3.5px;background:#dedede;border-radius:2px"></div>
<svg class="a" style="left:181px;top:345px" width="4" height="5"><polygon points="3,0.5 3,4.5 0.5,2.5" fill="#c4c4c4"/></svg>
<div class="a" style="left:179px;top:352px;width:631px;height:12px;background:#ebf2e8"></div>
<div class="t" style="left:409px;top:355px;font-size:6.8px;color:#c8c8c8">Total:</div>
<svg class="a" style="left:185px;top:372px" width="30" height="11"><path d="M6,1 L3,5 L6,9 M9,1 L6,5 L9,9 M23,1 L20,5 L23,9" fill="none" stroke="#e0e0e0" stroke-width="1"/><path d="M215,0" /></svg><div class="a" style="left:215px;top:372px;width:1px;height:10px;background:#f0f0f0"></div>
<div class="t" style="left:226px;top:374px;font-size:6.2px;color:#d8d8d8">Página</div>
<div class="a" style="left:250px;top:370.5px;width:21px;height:12px;border:1px solid #ececec;background:#fff"></div>
<div class="t" style="left:254px;top:374px;font-size:6.2px;color:#c8c8c8">1</div>
<div class="t" style="left:277px;top:374px;font-size:6.2px;color:#d8d8d8">de</div>
<svg class="a" style="left:360.5px;top:372px" width="10" height="9"><rect x="0.5" y="0.5" width="5.5" height="8" fill="#c4c4c4"/><rect x="6" y="1.5" width="3.5" height="6" fill="none" stroke="#c4c4c4" stroke-width="0.9"/><path d="M1.5,2.5 L4.5,6.5 M4.5,2.5 L1.5,6.5" stroke="#fff" stroke-width="0.8"/></svg>
<div class="t" style="left:373px;top:374px;font-size:6.6px;color:#cccccc">Exportar</div>
<div class="a" style="left:406px;top:371px;width:1px;height:12px;background:#eeeeee"></div>
<svg class="a" style="left:413.5px;top:373px" width="8" height="8"><path d="M1,1 L7,7 M7,1 L1,7" stroke="#c0c0c0" stroke-width="1.5"/></svg>
<!-- ============ PREVIEW MODAL ============ -->
<div class="a" style="left:427.5px;top:123px;width:491px;height:342px;background:#f3f3f3;border:1px solid #d0d0d0;border-radius:3px;box-shadow:0 1px 5px rgba(0,0,0,0.18)"></div>
<div class="a" style="left:433.7px;top:129.7px;width:8px;height:5px;background:linear-gradient(#7aa0d8,#5a7fb8);border-radius:1px"></div>
<div class="t" style="left:445px;top:128.5px;font-size:7.3px;color:#333;-webkit-text-stroke:0.15px #333">Preview</div>
<svg class="a" style="left:878px;top:125px" width="38" height="14" viewBox="878 125 38 14">
<circle cx="884.2" cy="131" r="3" fill="none" stroke="#8a8a8a" stroke-width="1"/><path d="M886.4,133.2 L889,135.8" stroke="#8a8a8a" stroke-width="1.3"/>
<circle cx="897" cy="131.8" r="4.6" fill="#8c8c8c"/><circle cx="897" cy="131.8" r="2.6" fill="none" stroke="#fff" stroke-width="0.9"/><path d="M895.2,130 L898.8,133.6" stroke="#fff" stroke-width="0.9"/>
<circle cx="908.6" cy="131.8" r="4.6" fill="#8c8c8c"/><path d="M906.6,129.8 L910.6,133.8 M910.6,129.8 L906.6,133.8" stroke="#fff" stroke-width="1.1"/>
</svg>
<!-- ribbon -->
<div class="a" style="left:442px;top:149px;width:11px;height:10px;background:#1d7044;border-radius:1px"></div>
<div class="a" style="left:442px;top:150px;width:6px;height:8px;background:#107c41"></div>
<div class="t" style="left:443.5px;top:151px;font-size:6px;font-weight:bold;color:#fff">X</div>
<div class="t" style="left:466px;top:150.5px;font-size:7.3px;color:#222;-webkit-text-stroke:0.2px #222">96e6902d-1e05-4e7c-b130-2ed3b40ab422</div>
<div class="t" style="left:621px;top:151px;font-size:7px;color:#666">&#709;</div>
<div class="a" style="left:642px;top:146px;width:200px;height:17px;background:#fafafa;border:1px solid #e0e0e0;border-radius:4px"></div>
<svg class="a" style="left:650px;top:149px" width="12" height="11"><circle cx="6.8" cy="4.6" r="2.8" fill="none" stroke="#555" stroke-width="0.8"/><path d="M4.8,6.6 L2,9.4" stroke="#555" stroke-width="0.9"/></svg>
<div class="t" style="left:665px;top:151.5px;font-size:6.7px;color:#333;-webkit-text-stroke:0.15px #333">Pesquisar ferramentas, ajuda e mais</div>
<!-- formula bar -->
<div class="a" style="left:435px;top:168.5px;width:65px;height:13px;background:#f8f8f8;border:1px solid #dcdcdc;border-radius:2px"></div>
<div class="t" style="left:438px;top:172px;font-size:6.5px;color:#bbb">A1</div>
<svg class="a" style="left:491px;top:172px" width="10" height="8"><path d="M1.5,2 L4.5,5 L7.5,2" fill="none" stroke="#999" stroke-width="0.8"/></svg>
<div class="a" style="left:505px;top:168.5px;width:35px;height:13px;background:#f8f8f8;border:1px solid #dcdcdc;border-radius:2px"></div>
<svg class="a" style="left:505px;top:168.5px" width="35" height="13"><path d="M3.5,3.5 L9,9 M9,3.5 L3.5,9" stroke="#b8b8b8" stroke-width="0.8" fill="none"/><path d="M12.5,6.5 L15,9 L20,3.8" stroke="#b8b8b8" stroke-width="0.8" fill="none"/><text x="25.5" y="9.5" style="font-family:'Liberation Serif';font-style:italic;font-size:8px" fill="#b0b0b0">f</text><text x="28.5" y="10.5" style="font-family:'Liberation Serif';font-style:italic;font-size:5px" fill="#b0b0b0">x</text></svg>
<div class="a" style="left:544px;top:168.5px;width:360px;height:13px;background:#fafafa;border:1px solid #dcdcdc;border-radius:2px"></div>
<div class="t" style="left:548.5px;top:172px;font-size:6.9px;color:#222;-webkit-text-stroke:0.15px #222">Data da inspeção</div>
<!-- sheet -->
<div class="a" style="left:431px;top:183.5px;width:478.5px;height:15px;background:#f5f5f5;border-bottom:1px solid #dadada"></div>
<div class="a" style="left:453px;top:183.5px;width:1px;height:15px;background:#c8c8c8"></div>
<div class="a" style="left:659px;top:185px;width:1px;height:13.5px;background:#dadada"></div>
<svg class="a" style="left:445px;top:190px" width="7" height="7"><polygon points="7,0 7,7 0,7" fill="#bdbdbd"/></svg>
<div class="t" style="left:472.5px;top:189.5px;font-size:7.5px;color:#666">U</div>
<div class="a" style="left:453px;top:198.5px;width:456.5px;height:10px;background:#ffffff"></div>
<div class="a" style="left:431px;top:198.5px;width:22px;height:10px;background:#cbe6d3;border-bottom:1px solid #e2e2e2;overflow:hidden"><div class="t" style="right:2px;top:2.6px;font-size:7.5px;color:#217346">1</div></div>
<div class="a" style="left:453px;top:208.5px;width:456.5px;height:10px;background:#e2efda"></div>
<div class="a" style="left:431px;top:208.5px;width:22px;height:10px;background:#f5f5f5;border-bottom:1px solid #e2e2e2;overflow:hidden"><div class="t" style="right:2px;top:2.6px;font-size:7.5px;color:#6a6a6a">2</div></div>
<div class="a" style="left:453px;top:218.5px;width:456.5px;height:10px;background:#a9d08e"></div>
<div class="a" style="left:431px;top:218.5px;width:22px;height:10px;background:#f5f5f5;border-bottom:1px solid #e2e2e2;overflow:hidden"><div class="t" style="right:2px;top:2.6px;font-size:7.5px;color:#6a6a6a">3</div></div>
<div class="a" style="left:453px;top:228.5px;width:456.5px;height:10px;background:#e2efda"></div>
<div class="a" style="left:431px;top:228.5px;width:22px;height:10px;background:#f5f5f5;border-bottom:1px solid #e2e2e2;overflow:hidden"><div class="t" style="right:2px;top:2.6px;font-size:7.5px;color:#6a6a6a">4</div></div>
<div class="a" style="left:453px;top:238.5px;width:456.5px;height:10px;background:#a9d08e"></div>
<div class="a" style="left:431px;top:238.5px;width:22px;height:10px;background:#f5f5f5;border-bottom:1px solid #e2e2e2;overflow:hidden"><div class="t" style="right:2px;top:2.6px;font-size:7.5px;color:#6a6a6a">5</div></div>
<div class="a" style="left:453px;top:248.5px;width:456.5px;height:10px;background:#e2efda"></div>
<div class="a" style="left:431px;top:248.5px;width:22px;height:10px;background:#f5f5f5;border-bottom:1px solid #e2e2e2;overflow:hidden"><div class="t" style="right:2px;top:2.6px;font-size:7.5px;color:#6a6a6a">6</div></div>
<div class="a" style="left:453px;top:258.5px;width:456.5px;height:10px;background:#a9d08e"></div>
<div class="a" style="left:431px;top:258.5px;width:22px;height:10px;background:#f5f5f5;border-bottom:1px solid #e2e2e2;overflow:hidden"><div class="t" style="right:2px;top:2.6px;font-size:7.5px;color:#6a6a6a">7</div></div>
<div class="a" style="left:453px;top:268.5px;width:456.5px;height:10px;background:#e2efda"></div>
<div class="a" style="left:431px;top:268.5px;width:22px;height:10px;background:#f5f5f5;border-bottom:1px solid #e2e2e2;overflow:hidden"><div class="t" style="right:2px;top:2.6px;font-size:7.5px;color:#6a6a6a">8</div></div>
<div class="a" style="left:453px;top:278.5px;width:456.5px;height:10px;background:#a9d08e"></div>
<div class="a" style="left:431px;top:278.5px;width:22px;height:10px;background:#f5f5f5;border-bottom:1px solid #e2e2e2;overflow:hidden"><div class="t" style="right:2px;top:2.6px;font-size:7.5px;color:#6a6a6a">9</div></div>
<div class="a" style="left:453px;top:288.5px;width:456.5px;height:10px;background:#e2efda"></div>
<div class="a" style="left:431px;top:288.5px;width:22px;height:10px;background:#f5f5f5;border-bottom:1px solid #e2e2e2;overflow:hidden"><div class="t" style="right:2px;top:2.6px;font-size:7.5px;color:#6a6a6a">10</div></div>
<div class="a" style="left:453px;top:298.5px;width:456.5px;height:10px;background:#a9d08e"></div>
<div class="a" style="left:431px;top:298.5px;width:22px;height:10px;background:#f5f5f5;border-bottom:1px solid #e2e2e2;overflow:hidden"><div class="t" style="right:2px;top:2.6px;font-size:7.5px;color:#6a6a6a">11</div></div>
<div class="a" style="left:453px;top:308.5px;width:456.5px;height:10px;background:#e2efda"></div>
<div class="a" style="left:431px;top:308.5px;width:22px;height:10px;background:#f5f5f5;border-bottom:1px solid #e2e2e2;overflow:hidden"><div class="t" style="right:2px;top:2.6px;font-size:7.5px;color:#6a6a6a">12</div></div>
<div class="a" style="left:453px;top:318.5px;width:456.5px;height:10px;background:#a9d08e"></div>
<div class="a" style="left:431px;top:318.5px;width:22px;height:10px;background:#f5f5f5;border-bottom:1px solid #e2e2e2;overflow:hidden"><div class="t" style="right:2px;top:2.6px;font-size:7.5px;color:#6a6a6a">13</div></div>
<div class="a" style="left:453px;top:328.5px;width:456.5px;height:10px;background:#e2efda"></div>
<div class="a" style="left:431px;top:328.5px;width:22px;height:10px;background:#f5f5f5;border-bottom:1px solid #e2e2e2;overflow:hidden"><div class="t" style="right:2px;top:2.6px;font-size:7.5px;color:#6a6a6a">14</div></div>
<div class="a" style="left:453px;top:338.5px;width:456.5px;height:10px;background:#a9d08e"></div>
<div class="a" style="left:431px;top:338.5px;width:22px;height:10px;background:#f5f5f5;border-bottom:1px solid #e2e2e2;overflow:hidden"><div class="t" style="right:2px;top:2.6px;font-size:7.5px;color:#6a6a6a">15</div></div>
<div class="a" style="left:453px;top:348.5px;width:456.5px;height:10px;background:#e2efda"></div>
<div class="a" style="left:431px;top:348.5px;width:22px;height:10px;background:#f5f5f5;border-bottom:1px solid #e2e2e2;overflow:hidden"><div class="t" style="right:2px;top:2.6px;font-size:7.5px;color:#6a6a6a">16</div></div>
<div class="a" style="left:453px;top:358.5px;width:456.5px;height:10px;background:#a9d08e"></div>
<div class="a" style="left:431px;top:358.5px;width:22px;height:10px;background:#f5f5f5;border-bottom:1px solid #e2e2e2;overflow:hidden"><div class="t" style="right:2px;top:2.6px;font-size:7.5px;color:#6a6a6a">17</div></div>
<div class="a" style="left:453px;top:368.5px;width:456.5px;height:10px;background:#e2efda"></div>
<div class="a" style="left:431px;top:368.5px;width:22px;height:10px;background:#f5f5f5;border-bottom:1px solid #e2e2e2;overflow:hidden"><div class="t" style="right:2px;top:2.6px;font-size:7.5px;color:#6a6a6a">18</div></div>
<div class="a" style="left:453px;top:378.5px;width:456.5px;height:10px;background:#a9d08e"></div>
<div class="a" style="left:431px;top:378.5px;width:22px;height:10px;background:#f5f5f5;border-bottom:1px solid #e2e2e2;overflow:hidden"><div class="t" style="right:2px;top:2.6px;font-size:7.5px;color:#6a6a6a">19</div></div>
<div class="a" style="left:453px;top:388.5px;width:456.5px;height:10px;background:#e2efda"></div>
<div class="a" style="left:431px;top:388.5px;width:22px;height:10px;background:#f5f5f5;border-bottom:1px solid #e2e2e2;overflow:hidden"><div class="t" style="right:2px;top:2.6px;font-size:7.5px;color:#6a6a6a">20</div></div>
<div class="a" style="left:453px;top:398.5px;width:456.5px;height:4.5px;background:#a9d08e"></div>
<div class="a" style="left:431px;top:398.5px;width:22px;height:4.5px;background:#f5f5f5;border-bottom:1px solid #e2e2e2;overflow:hidden"><div class="t" style="right:2px;top:2.6px;font-size:7.5px;color:#6a6a6a">21</div></div>
<div class="a" style="left:453px;top:198.5px;width:1.5px;height:10px;background:#217346"></div>
<div class="a" style="left:650.5px;top:199px;width:7.5px;height:9px;background:#fff;border:1px solid #b8b8b8;border-radius:1px"></div>
<svg class="a" style="left:651px;top:199.5px" width="7" height="8"><path d="M2,3.5 L3.5,5 L5,3.5" fill="none" stroke="#777" stroke-width="0.6"/></svg>
<div class="t" style="left:661px;top:201.5px;font-size:6.7px;font-weight:bold;color:#1a1a1a">Oportunidade de melhoria</div>
<!-- vertical scrollbar -->
<div class="a" style="left:909.5px;top:183.5px;width:7px;height:226px;background:#ececec"></div>
<svg class="a" style="left:910.5px;top:185px" width="5" height="4"><polygon points="0,4 5,4 2.5,0" fill="#888"/></svg>
<div class="a" style="left:911px;top:192px;width:3.5px;height:23.5px;background:#747474;border-radius:2px"></div>
<svg class="a" style="left:910px;top:397px" width="6" height="4"><polygon points="0,0 6,0 3,4" fill="#777"/></svg>
<!-- h scrollbar -->
<div class="a" style="left:431px;top:403px;width:478.5px;height:7px;background:#e9e9e9"></div>
<div class="a" style="left:770px;top:405px;width:31px;height:3px;background:#6f6f6f;border-radius:2px"></div>
<svg class="a" style="left:433px;top:404.5px" width="4" height="5"><polygon points="4,0 4,5 0,2.5" fill="#666"/></svg>
<svg class="a" style="left:904px;top:404.5px" width="4" height="5"><polygon points="0,0 0,5 4,2.5" fill="#666"/></svg>
<!-- tabs -->
<div class="a" style="left:428.5px;top:410px;width:489px;height:16px;background:#f3f3f3;border-bottom:1px solid #e2e2e2"></div>
<svg class="a" style="left:436px;top:413px" width="45" height="10"><path d="M4,2 L2,5 L4,8 M20,2 L22,5 L20,8" fill="none" stroke="#c4c4c4" stroke-width="0.8"/><rect x="34" y="2.2" width="6" height="5.6" fill="#c8c8c8"/><path d="M34,4.1 H40 M34,6 H40" stroke="#f3f3f3" stroke-width="0.6"/></svg>
<div class="t" style="left:483px;top:414px;font-size:7.5px;color:#777">Ir</div>
<div class="t" style="left:558px;top:414.5px;font-size:6.4px;font-weight:bold;color:#444">Respostas</div>
<div class="a" style="left:557px;top:424px;width:34px;height:1.5px;background:#217346"></div>
<div class="t" style="left:598px;top:413px;font-size:8px;color:#c4c4c4">+</div>
<!-- status -->
<div class="a" style="left:428.5px;top:426px;width:489px;height:12px;background:#fff"></div>
<div class="t" style="left:447.5px;top:430.3px;font-size:6.1px;color:#333">Estatísticas de Pasta de Trabalho</div>
<div class="t" style="left:556px;top:430.3px;font-size:6.3px;color:#333;-webkit-text-stroke:0.15px #333">Modo de Término</div>
<div class="t" style="left:727px;top:429px;font-size:6px;color:#666">&#709;</div>
<div class="t" style="left:754px;top:430.3px;font-size:6.25px;color:#333">Fornecer Comentários à Microsoft</div>
<div class="a" style="left:869px;top:433px;width:6px;height:0.9px;background:#555"></div>
<div class="t" style="left:882px;top:431px;font-size:6.4px;color:#333;-webkit-text-stroke:0.15px #333">100%</div>
<div class="a" style="left:902px;top:433px;width:7px;height:0.9px;background:#444"></div><div class="a" style="left:905.05px;top:429.5px;width:0.9px;height:7px;background:#444"></div>
<!-- bottom -->
<svg class="a" style="left:437px;top:444.5px" width="11" height="11"><circle cx="5.4" cy="5.5" r="4.6" fill="#3a6cb0"/><circle cx="5.4" cy="3.2" r="0.9" fill="#fff"/><rect x="4.7" y="4.6" width="1.4" height="3.8" fill="#fff"/></svg>
<div class="a" style="left:816px;top:444px;width:47.5px;height:12.5px;background:#f0f0f0;border:1px solid #e4e4e4;border-radius:2px"></div>
<svg class="a" style="left:818.5px;top:445px" width="10" height="10"><path d="M5,0.8 V6 M2.8,3.9 L5,6.2 L7.2,3.9 M1,5.8 V8.6 H9 V5.8" fill="none" stroke="#222" stroke-width="1.3"/></svg>
<div class="t" style="left:830px;top:447.5px;font-size:6.5px;color:#333;-webkit-text-stroke:0.15px #333">Download</div>
<div class="a" style="left:869px;top:444px;width:36px;height:12.5px;background:#f0f0f0;border:1px solid #e4e4e4;border-radius:2px"></div>
<svg class="a" style="left:871px;top:445.5px" width="9" height="9"><path d="M1,1 L8,8 M8,1 L1,8" stroke="#1a1a1a" stroke-width="1.6"/></svg>
<div class="t" style="left:881px;top:447.5px;font-size:6.6px;color:#333;-webkit-text-stroke:0.15px #333">Fechar</div>
<!-- ============ GREEN POPUP ============ -->
<div class="a" style="left:763.5px;top:146.3px;width:147.3px;height:66.2px;background:#137a3e;box-shadow:0 1px 3px rgba(0,0,0,0.3)"></div>
<div class="t" style="left:774.3px;top:156.5px;font-size:10.6px;letter-spacing:-0.35px;font-weight:bold;color:#fff">Editar sua própria cópia</div>
<div class="t" style="left:774.3px;top:176px;font-size:7.4px;color:#fff;-webkit-text-stroke:0.15px #fff;line-height:10px">Você pode editar facilmente uma<br>cópia deste arquivo salvando-o em<br>seu OneDrive</div>

<!-- ============ ARROWS ============ -->
<svg class="a" style="left:0;top:0" width="1024" height="498" viewBox="0 0 1024 498">
<g fill="#cc1218">
<!-- arrow 2 -->
<polygon points="0,65.8 20,65.8 18,58 37,72 17.6,89 20,79.2 0,79.2"/>
<circle cx="13" cy="50" r="12.2"/>
<!-- arrow 1 -->
<polygon points="82,50 102,33 98,43.5 133,43.5 133,56.6 98,56.6 102,67"/>
<circle cx="133" cy="50" r="12"/>
<!-- arrow 3 -->
<polygon points="298,370 338.6,370 335,359.4 355,376 335,393.4 338.6,384 298,384"/>
<circle cx="298" cy="376" r="12"/>
<!-- arrow 4 -->
<polygon points="501,411 536,411 532,400.5 552,417.6 532,435 536,424.6 501,424.6"/>
<circle cx="501" cy="417.5" r="12"/>
<!-- excel arrow -->
<polygon points="600.8,196.6 634.5,196.6 630.7,186.6 649.8,203.2 630.7,220.7 634.5,209.9 600.8,209.9"/>
</g>
<g fill="#fff" stroke="#fff" stroke-width="0.7" style="font-family:'Liberation Sans',sans-serif;font-weight:bold;font-size:19.5px" text-anchor="middle">
<text x="13" y="57.2">2</text>

<text x="299.3" y="384">3</text>
<text x="501" y="424.7">4</text>
</g>
<path d="M130.6,44 H135.2 V58.6 H130.6 V49.4 L127,50.9 V47.1 Z" fill="#fff"/>
</svg>
</body></html>
